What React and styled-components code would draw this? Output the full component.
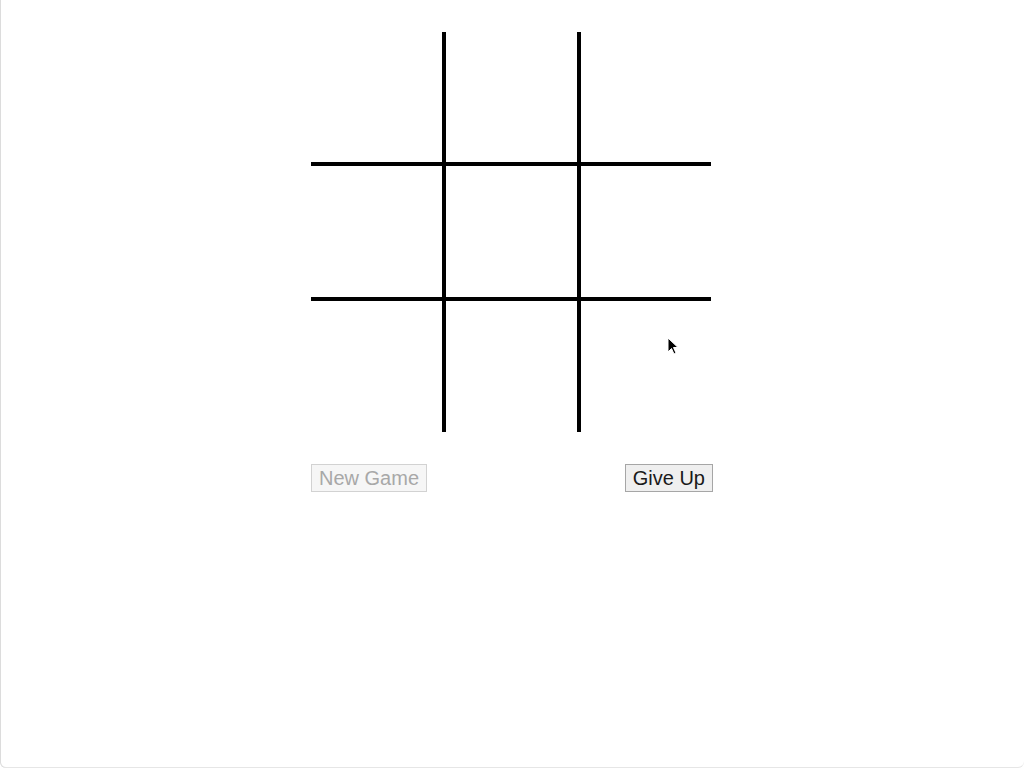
import React from "react";
import styled, { createGlobalStyle } from "styled-components";

const GlobalStyle = createGlobalStyle`
  html, body {
    margin: 0;
    padding: 0;
    background: #ffffff;
  }
  body {
    font-family: "Liberation Sans", Arial, sans-serif;
  }
`;

const Window = styled.div`
  position: relative;
  width: 1024px;
  height: 768px;
  box-sizing: border-box;
  box-shadow: inset 1px 0 0 #dcdcdc, inset 0 -1px 0 #e6e6e6;
  border-radius: 0 0 6px 6px;
  padding-top: 32px;
  overflow: hidden;
`;

const Game = styled.div`
  width: 402px;
  margin: 0 auto;
  display: flex;
  flex-direction: column;
  align-items: flex-start;
`;

const Board = styled.div`
  display: grid;
  grid-template-columns: 131px 131px 130px;
  grid-template-rows: 130px 131px 131px;
  gap: 4px;
  background: #000;
`;

const Cell = styled.div`
  background: #fff;
`;

const Controls = styled.div`
  align-self: stretch;
  margin-top: 32px;
  display: flex;
  justify-content: space-between;
  align-items: flex-start;
`;

const Button = styled.button`
  font-family: "Liberation Sans", Arial, sans-serif;
  font-size: 20px;
  line-height: 22px;
  height: 28px;
  padding: 0 7px;
  box-sizing: border-box;
  border-radius: 0;
  border: 1px solid ${(p) => (p.disabled ? "#d2d2d2" : "#a6a6a6")};
  background: ${(p) => (p.disabled ? "#f6f6f6" : "#efefef")};
  color: ${(p) => (p.disabled ? "#a8a8a8" : "#1a1a1a")};
  cursor: default;
`;

const Cursor = styled.svg`
  position: absolute;
  left: 667px;
  top: 337px;
  width: 12px;
  height: 19px;
  pointer-events: none;
`;

export default function App() {
  const cells = Array.from({ length: 9 });
  return (
    <>
      <GlobalStyle />
      <Window>
        <Game>
          <Board>
            {cells.map((_, i) => (
              <Cell key={i} />
            ))}
          </Board>
          <Controls>
            <Button disabled>New Game</Button>
            <Button>Give Up</Button>
          </Controls>
        </Game>
        <Cursor viewBox="0 0 12 19">
          <path
            d="M1 1 L1 15 L4.5 11.5 L7 17 L9 16 L6.5 10.5 L11 10.5 Z"
            fill="#000"
            stroke="#fff"
            strokeWidth="1"
            strokeLinejoin="round"
          />
        </Cursor>
      </Window>
    </>
  );
}
